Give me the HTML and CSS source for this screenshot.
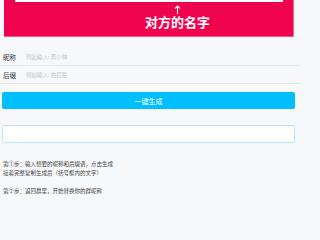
FILE: index.html
```html
<!DOCTYPE html>
<html lang="zh-CN">
<head>
<meta charset="utf-8">
<link rel="stylesheet" href="styles.css">
</head>
<body>
<div class="banner">
  <div class="banner-box"></div>
  <div class="banner-hint">
    <svg class="arrow" width="7" height="9" viewBox="0 0 7 9"><path d="M3.5 9V1M1 3.5L3.5 1L6 3.5" fill="none" stroke="#fff" stroke-width="1.1"/></svg>
    <div class="banner-text">对方的名字</div>
  </div>
</div>
<div class="form">
  <label class="row"><span class="label">昵称</span><input class="field" placeholder="例如输入: 周小帅"></label>
  <label class="row"><span class="label">后缀</span><input class="field" placeholder="例如输入: 的屁股"></label>
</div>
<div class="btn">一键生成</div>
<div class="result"></div>
<div class="steps">
  <p>第①步：输入想要的昵称和后缀语，点击生成<br>接着完整复制生成后（括号框内的文字）</p>
  <p>第②步：返回群里，开始替换你的群昵称</p>
</div>
</body>
</html>
```
FILE: styles.css
```css
html, body {
  margin: 0;
  padding: 0;
}
body {
  background: #f7f8fa;
  font-family: "Noto Sans CJK SC", "Noto Sans", sans-serif;
  width: 300px;
  height: 200px;
  overflow: hidden;
}
.banner {
  margin: 0 6px 0 4px;
  height: 37px;
  background: #ef024e;
  border-right: 1px solid #f4649a;
  border-bottom: 1px solid #f25a8d;
  box-sizing: border-box;
  display: flex;
  flex-direction: column;
}
.banner-box {
  margin: 0 10px 0 11px;
  height: 1.5px;
  background: #fff;
}
.banner-hint {
  display: flex;
  flex-direction: column;
  align-items: center;
  padding-left: 58px;
  padding-top: 3px;
}
.arrow {
  display: block;
}
.banner-text {
  color: #fff;
  font-weight: bold;
  font-size: 13px;
  line-height: 15px;
  margin-top: 0;
}
.form {
  margin-top: 11px;
}
.row {
  display: flex;
  align-items: center;
  height: 17px;
  border-bottom: 1px solid #e6e6e6;
  padding-left: 3px;
}
.label {
  font-size: 6.5px;
  color: #333;
  width: 23px;
  flex: none;
}
.field {
  border: none;
  background: transparent;
  outline: none;
  padding: 0;
  font-family: inherit;
  font-size: 5.5px;
  color: #333;
  flex: 1;
}
.field::placeholder {
  color: #c4c4c4;
}
.btn {
  margin: 8px 5px 0 2px;
  height: 17px;
  background: #00bfff;
  border-radius: 2px;
  color: #fff;
  font-size: 7px;
  display: flex;
  align-items: center;
  justify-content: center;
}
.result {
  margin: 16px 5px 0 2px;
  height: 18px;
  background: #fff;
  border: 1px solid #b6e6fb;
  border-radius: 2px;
  box-sizing: border-box;
}
.steps {
  margin-top: 17px;
  padding-left: 3px;
  font-size: 5.5px;
  line-height: 9px;
  color: #444;
}
.steps p {
  margin: 0 0 9px;
}
```
